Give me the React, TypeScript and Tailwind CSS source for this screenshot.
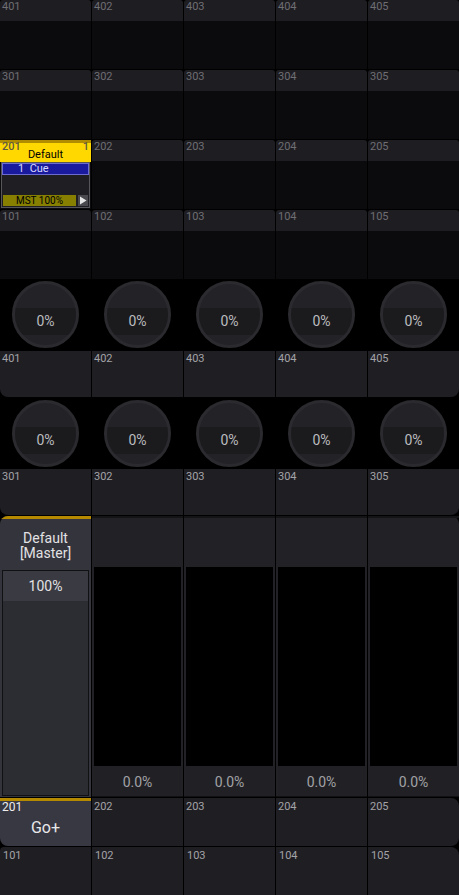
import React from 'react';

const font = { fontFamily: 'Roboto, "Liberation Sans", sans-serif' };

const cols = [1, 2, 3, 4, 5];

// small empty executor in the top block
function TopCell({ label }: { label: string }) {
  return (
    <div className="flex flex-col">
      <div className="h-[21px] bg-[#1e1d22] rounded-t-[3px] px-[2px] text-[11px] leading-[14px] text-[#6e6e73]">{label}</div>
      <div className="flex-1 bg-[#0b0b0d]" />
    </div>
  );
}

function SequenceCell() {
  return (
    <div className="flex flex-col bg-[#0b0b0d]">
      <div className="h-[22px] bg-[#ffd800] relative">
        <div className="h-[3px] bg-[#b08c00]" />
        <div className="absolute left-[2px] top-0 text-[11px] leading-[14px] text-[#5e5a45] font-medium">201</div>
        <div className="absolute right-[2px] top-0 text-[11px] leading-[14px] text-[#5e5a45] font-medium">1</div>
        <div className="text-center text-[11px] leading-[14px] pt-[5px] text-black">Default</div>
      </div>
      <div className="flex-1 mx-[1px] mb-[1px] border border-[#56565a] flex flex-col bg-[#1f1f23]">
        <div className="h-[12px] bg-[#1a1a9e] border border-[#6b6bd0] text-[11px] leading-[10px] text-[#d8d8ff] pl-[15px]">1&nbsp;&nbsp;Cue</div>
        <div className="flex-1" />
        <div className="h-[11px] flex gap-[2px] mx-px mb-px">
          <div className="flex-1 bg-[#877f00] text-[10px] leading-[11px] text-black text-center">MST 100%</div>
          <div className="w-[10px] bg-[#4a4a4e] flex items-center justify-center">
            <svg width="8" height="9" viewBox="0 0 8 9"><path d="M1 0.5 L7.5 4.5 L1 8.5 Z" fill="#e6e6e6" /></svg>
          </div>
        </div>
      </div>
    </div>
  );
}

function Knob() {
  return (
    <div className="flex justify-center pt-px">
      <div className="w-[67px] h-[67px] rounded-full border-[3px] border-[#2b2b2f] bg-[#232327] overflow-hidden flex flex-col">
        <div className="h-[24px]" />
        <div className="h-[27px] bg-[#1b1b1e] flex items-center justify-center text-[14px] text-[#bcbcbe]">0%</div>
        <div className="flex-1" />
      </div>
    </div>
  );
}

function MidRow({ base }: { base: number }) {
  return (
    <div className="grid grid-cols-5 gap-x-px h-[46px]">
      {cols.map((c) => (
        <div
          key={c}
          className={`bg-[#1f1e23] px-[2px] text-[11px] leading-[15px] text-[#a3a3a7] ${c === 1 ? 'rounded-bl-[8px]' : ''} ${c === 5 ? 'rounded-br-[8px]' : ''}`}
        >
          {base + c}
        </div>
      ))}
    </div>
  );
}

export default function App() {
  return (
    <div className="w-[459px] h-[895px] bg-black overflow-hidden flex flex-col" style={font}>
      {/* top executor block */}
      <div className="flex flex-col gap-y-px">
        {[400, 300, 200, 100].map((base) => (
          <div key={base} className="grid grid-cols-5 gap-x-px h-[69px]">
            {cols.map((c) =>
              base === 200 && c === 1 ? <SequenceCell key={c} /> : <TopCell key={c} label={String(base + c)} />
            )}
          </div>
        ))}
      </div>

      {/* knobs 400 */}
      <div className="grid grid-cols-5 gap-x-px h-[70px] mt-px">
        {cols.map((c) => <Knob key={c} />)}
      </div>
      <div className="mt-px">
        <MidRow base={400} />
      </div>

      {/* knobs 300 */}
      <div className="grid grid-cols-5 gap-x-px h-[72px] pt-[2px]">
        {cols.map((c) => <Knob key={c} />)}
      </div>
      <MidRow base={300} />

      {/* faders */}
      <div className="grid grid-cols-5 gap-x-px h-[281px] mt-px">
        <div className="flex flex-col bg-[#34343c] rounded-tl-[8px] overflow-hidden">
          <div className="h-[3px] bg-[#b58a00]" />
          <div className="h-[51px] flex flex-col items-center justify-center pt-[2px] text-[14px] leading-[15px] text-[#e2e2e4]">
            <span>Default</span>
            <span>[Master]</span>
          </div>
          <div className="flex-1 mx-[2px] mb-[1px] border border-[#111114] flex flex-col bg-[#2c2c33]">
            <div className="h-[30px] bg-[#3a3a42] flex items-center justify-center text-[14px] text-[#e2e2e4]">100%</div>
          </div>
        </div>
        {[2, 3, 4, 5].map((c) => (
          <div key={c} className={`flex flex-col bg-[#222226] ${c === 5 ? 'rounded-tr-[8px]' : ''}`}>
            <div className="h-[2px] bg-[#141417]" />
            <div className="h-[49px]" />
            <div className="flex-1 mx-[2px] flex flex-col">
              <div className="flex-1 bg-black" />
              <div className="h-[30px] bg-[#212125] flex items-center justify-center pt-[2px] text-[14px] text-[#a2a2a6]">0.0%</div>
            </div>
            <div className="h-px bg-[#111114]" />
          </div>
        ))}
      </div>

      {/* 200 buttons */}
      <div className="grid grid-cols-5 gap-x-px h-[48px] mt-px">
        <div className="flex flex-col bg-[#383842] rounded-bl-[8px]">
          <div className="h-[3px] bg-[#b58a00]" />
          <div className="px-[2px] text-[12px] leading-[13px] text-[#eeeeee]">201</div>
          <div className="flex-1 flex items-start justify-center text-[16px] leading-[20px] text-[#e8e8ea] pt-[4px]">Go+</div>
        </div>
        {[2, 3, 4, 5].map((c) => (
          <div
            key={c}
            className={`bg-[#1f1e23] px-[2px] pt-[2px] text-[11px] leading-[14px] text-[#a3a3a7] ${c === 5 ? 'rounded-r-[8px]' : ''}`}
          >
            {200 + c}
          </div>
        ))}
      </div>

      {/* 100 buttons */}
      <div className="grid grid-cols-5 gap-x-px flex-1 mt-px">
        {cols.map((c) => (
          <div
            key={c}
            className={`bg-[#1f1e23] px-[3px] pt-[2px] text-[11px] leading-[14px] text-[#a3a3a7] ${c === 1 ? 'rounded-tl-[4px]' : ''} ${c === 5 ? 'rounded-tr-[8px]' : ''}`}
          >
            {100 + c}
          </div>
        ))}
      </div>
    </div>
  );
}
